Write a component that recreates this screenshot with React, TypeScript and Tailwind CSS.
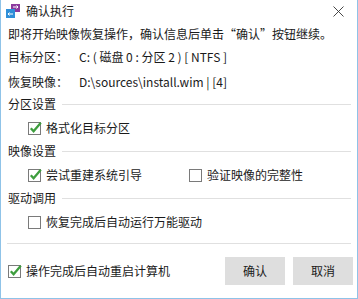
import React from "react";

function CheckBox({ checked }: { checked?: boolean }) {
  return (
    <svg width="14" height="14" viewBox="0 0 14 14" className="shrink-0">
      <rect x="0.5" y="1.5" width="12" height="12" fill="white" stroke="#7a7a7a" />
      {checked && (
        <path d="M2.8 7.2 L5.6 10.2 L12.8 1.8" fill="none" stroke="#3e9e3e" strokeWidth="2.3" />
      )}
    </svg>
  );
}

function GroupHeader({ title }: { title: string }) {
  return (
    <div className="h-[23.5px] flex items-center pl-[7px] pr-[6px]">
      <span>{title}</span>
      <div className="flex-1 h-px bg-[#e0e0e0] ml-[6px]" />
    </div>
  );
}

function Option({ label, checked }: { label: string; checked?: boolean }) {
  return (
    <label className="flex items-center gap-[4px]">
      <CheckBox checked={checked} />
      <span>{label}</span>
    </label>
  );
}

export default function App() {
  return (
    <div className="w-[358px] h-[299px] bg-white border-x border-b border-[#8fc3e8] flex flex-col text-[12px] text-[#1a1a1a] font-['Microsoft_YaHei','Noto_Sans_CJK_SC',sans-serif] overflow-hidden">
      {/* Title bar */}
      <div className="h-[22px] flex items-center pl-[5px] pr-[8px] shrink-0">
        <svg width="14" height="14" viewBox="0 0 14 14">
          <rect x="5" y="0" width="9" height="8" fill="#8b3a9e" />
          <rect x="0" y="5" width="9" height="9" fill="#2f8fd8" />
          <path d="M7 3 H12 M10.5 1.5 L12 3 L10.5 4.5" stroke="white" strokeWidth="1" fill="none" />
          <path d="M7 10 H2 M3.5 8.5 L2 10 L3.5 11.5" stroke="white" strokeWidth="1" fill="none" />
        </svg>
        <span className="ml-[6px] text-[12px]">确认执行</span>
        <svg width="11" height="11" viewBox="0 0 11 11" className="ml-auto mr-[5px]">
          <path d="M0.5 0.5 L10.5 10.5 M10.5 0.5 L0.5 10.5" stroke="#333" strokeWidth="0.9" />
        </svg>
      </div>

      {/* Content */}
      <div className="h-[23.5px] flex items-center pl-[7px] whitespace-nowrap">
        即将开始映像恢复操作，确认信息后单击“确认”按钮继续。
      </div>
      <div className="h-[23.5px] flex items-center pl-[7px] whitespace-nowrap">
        <span className="w-[71px]">目标分区：</span>
        <span className="whitespace-pre">C: ( 磁盘 0 : 分区 2 ) [ NTFS ]</span>
      </div>
      <div className="h-[23.5px] flex items-center pl-[7px] whitespace-nowrap pt-[2px]">
        <span className="w-[71px]">恢复映像：</span>
        <span>D:\sources\install.wim | [4]</span>
      </div>

      <GroupHeader title="分区设置" />
      <div className="h-[23.5px] flex items-center pl-[27px]">
        <Option label="格式化目标分区" checked />
      </div>

      <GroupHeader title="映像设置" />
      <div className="h-[23.5px] flex items-center pl-[27px]">
        <div className="w-[161px]">
          <Option label="尝试重建系统引导" checked />
        </div>
        <Option label="验证映像的完整性" />
      </div>

      <GroupHeader title="驱动调用" />
      <div className="h-[23.5px] flex items-center pl-[27px]">
        <Option label="恢复完成后自动运行万能驱动" />
      </div>

      <div className="mt-[9px] mx-[6px] h-px bg-[#e0e0e0]" />

      {/* Footer */}
      <div className="flex items-center pl-[7px] pr-[4px] mt-[13px]">
        <Option label="操作完成后自动重启计算机" checked />
        <div className="ml-auto flex gap-[8px]">
          <button className="w-[60px] h-[28px] bg-[#dedede] text-[12px]">确认</button>
          <button className="w-[60px] h-[28px] bg-[#dedede] text-[12px]">取消</button>
        </div>
      </div>
    </div>
  );
}
